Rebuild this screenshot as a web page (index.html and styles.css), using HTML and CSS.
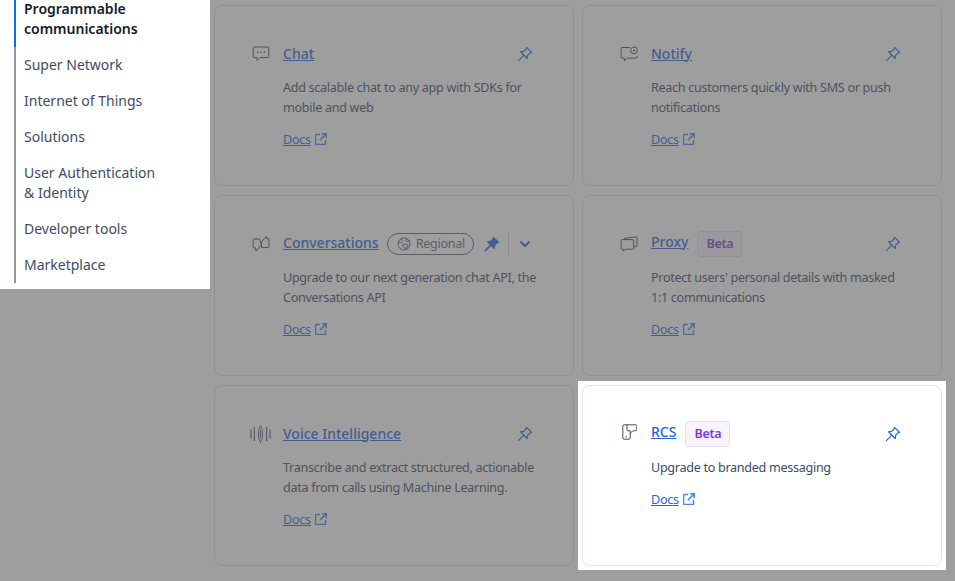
FILE: index.html
```html
<!DOCTYPE html>
<html lang="en">
<head>
  <meta charset="UTF-8" />
  <meta name="viewport" content="width=device-width, initial-scale=1.0" />
  <title>Products</title>
  <link rel="stylesheet" href="styles.css">
</head>
<body>
  <svg class="icon-defs" aria-hidden="true">
    <symbol id="pin" viewBox="0 0 20 20">
      <path d="M11.700 2.600 17.400 8.300 15.600 8.800 12.900 11.600 12.500 15 5 7.500 8.400 7.100 11.200 4.400Z M8.700 11.300 2.600 17.400" fill="none" stroke="currentColor" stroke-width="1.300" stroke-linejoin="round" stroke-linecap="round" />
    </symbol>
    <symbol id="pin-solid" viewBox="0 0 20 20">
      <path d="M11.700 2.600 17.400 8.300 15.600 8.800 12.900 11.600 12.500 15 5 7.500 8.400 7.100 11.200 4.400Z" fill="currentColor" stroke="currentColor" stroke-width="1.300" stroke-linejoin="round" />
      <path d="M8.700 11.300 2.600 17.400" fill="none" stroke="currentColor" stroke-width="1.800" stroke-linecap="round" />
    </symbol>
    <symbol id="external" viewBox="0 0 12 12">
      <path d="M5 1.500H1.200a.6.6 0 0 0-.6.6v8.700c0 .3.3.6.6.6h8.700c.3 0 .6-.3.6-.6V7" fill="none" stroke="currentColor" stroke-width="1.500" />
      <path d="M4.800 7.200 10.600 1.400M6.800 .8h4.400v4.400" fill="none" stroke="currentColor" stroke-width="1.600" />
    </symbol>
  </svg>

  <div class="overlay"></div>

  <div class="page">
    <nav class="sidebar">
      <ul class="nav-list">
        <li class="nav-item active">Programmable communications</li>
        <li class="nav-item">Super Network</li>
        <li class="nav-item">Internet of Things</li>
        <li class="nav-item">Solutions</li>
        <li class="nav-item">User Authentication<br>&amp; Identity</li>
        <li class="nav-item">Developer tools</li>
        <li class="nav-item">Marketplace</li>
      </ul>
    </nav>

    <main class="cards">
      <section class="card">
        <svg class="card-icon" viewBox="0 0 18 16" aria-hidden="true">
          <path d="M2.200 1h13.600c.6 0 1 .4 1 1v8.600c0 .6-.4 1-1 1H8l-3 3v-3H2.200c-.6 0-1-.4-1-1V2c0-.6.4-1 1-1Z" fill="none" stroke="currentColor" />
          <path d="M5 6.300h1.200M8.400 6.300h1.200M11.800 6.300H13" stroke="currentColor" stroke-width="1.400" />
        </svg>
        <div class="card-head">
          <a class="card-title" href="#">Chat</a>
          <svg class="pin"><use href="#pin" /></svg>
        </div>
        <p class="card-text">Add scalable chat to any app with SDKs for mobile and web</p>
        <a class="docs" href="#">Docs</a><svg class="ext"><use href="#external" /></svg>
      </section>

      <section class="card">
        <svg class="card-icon" viewBox="0 0 18 16" aria-hidden="true">
          <path d="M10 1.500H2c-.5 0-.9.4-.9.9v8.800c0 .5.4.9.9.9h2.400v3l3-3h8.600c.5 0 .9-.4.9-.9V9.800" fill="none" stroke="currentColor" />
          <circle cx="14" cy="4.400" r="3.400" fill="none" stroke="currentColor" />
          <circle cx="14" cy="4.400" r="1" fill="currentColor" />
        </svg>
        <div class="card-head">
          <a class="card-title" href="#">Notify</a>
          <svg class="pin"><use href="#pin" /></svg>
        </div>
        <p class="card-text">Reach customers quickly with SMS or push notifications</p>
        <a class="docs" href="#">Docs</a><svg class="ext"><use href="#external" /></svg>
      </section>

      <section class="card">
        <svg class="card-icon" viewBox="0 0 18 16" aria-hidden="true">
          <path d="M7.500 3H2c-.5 0-.9.4-.9.9v7.200c0 .5.4.9.9.9h1.800v3l3-3 2.600-3.500Z" fill="none" stroke="currentColor" />
          <path d="M9.500 11.600h6.600c.5 0 .9-.4.9-.9V3.500c0-.5-.4-.9-.9-.9h-1.600V.6l-2.400 2-2.600 3.600Z" fill="none" stroke="currentColor" />
        </svg>
        <div class="card-head">
          <a class="card-title lift-sm" href="#">Conversations</a>
          <span class="pill">
            <svg class="globe" viewBox="0 0 16 16" aria-hidden="true">
              <circle cx="8" cy="8" r="6.800" fill="none" stroke="currentColor" stroke-width="1.200" />
              <path d="M5 2.200 6.500 4.600 4.600 6.400 1.600 6.600M10 8.200l2.800.8-1.600 3.600-2 1.200-.6-3.200-2.400-.6.8-2.200ZM10.500 1.800 9.600 4l2.600 1.200 2.400-.8" fill="none" stroke="currentColor" stroke-width="1.100" />
            </svg>
            Regional
          </span>
          <svg class="pin pin-filled"><use href="#pin-solid" /></svg>
          <span class="divider"></span>
          <svg class="chevron" viewBox="0 0 12 8" aria-hidden="true">
            <path d="M1.500 1.500 6 6l4.500-4.500" fill="none" stroke="currentColor" stroke-width="2" />
          </svg>
        </div>
        <p class="card-text">Upgrade to our next generation chat API, the Conversations API</p>
        <a class="docs" href="#">Docs</a><svg class="ext"><use href="#external" /></svg>
      </section>

      <section class="card">
        <svg class="card-icon" viewBox="0 0 18 16" aria-hidden="true">
          <path d="M4.500 3.600V2.400L16 .9c.5 0 1 .3 1 .9v8c0 .5-.4.9-.9.9H13.800" fill="none" stroke="currentColor" />
          <path d="M2 3.600h10.800c.5 0 .9.4.9.9v7.800c0 .5-.4.9-.9.9H5.400L3.400 15v-1.800H2c-.5 0-.9-.4-.9-.9V4.500c0-.5.4-.9.9-.9Z" fill="none" stroke="currentColor" />
        </svg>
        <div class="card-head">
          <a class="card-title lift" href="#">Proxy</a>
          <span class="badge">Beta</span>
          <svg class="pin"><use href="#pin" /></svg>
        </div>
        <p class="card-text">Protect users' personal details with masked 1:1 communications</p>
        <a class="docs" href="#">Docs</a><svg class="ext"><use href="#external" /></svg>
      </section>

      <section class="card">
        <svg class="card-icon wide" viewBox="0 0 22 18" aria-hidden="true">
          <path d="M1 4.500v9M4.300 2v14M16.700 2v14M20 4.500v9" fill="none" stroke="currentColor" stroke-width="1" />
          <path d="M10.500 .5C7.800 5 7.800 13 10.500 17.500 13.200 13 13.200 5 10.500 .5ZM10.500 5v8" fill="none" stroke="currentColor" stroke-width=".9" />
        </svg>
        <div class="card-head">
          <a class="card-title" href="#">Voice Intelligence</a>
          <svg class="pin"><use href="#pin" /></svg>
        </div>
        <p class="card-text">Transcribe and extract structured, actionable data from calls using Machine Learning.</p>
        <a class="docs" href="#">Docs</a><svg class="ext"><use href="#external" /></svg>
      </section>

      <div class="spotlight">
        <section class="card">
          <svg class="card-icon narrow" viewBox="0 0 15 16" aria-hidden="true">
            <path d="M5 .8H2C1.200 .8 .8 1.200 .8 2v12c0 .8.4 1.200 1.200 1.200h5c.8 0 1.200-.4 1.200-1.200V9" fill="none" stroke="currentColor" />
            <path d="M5 .8h8.800c.6 0 1 .4 1 1v4c0 .6-.4 1-1 1h-3L8.300 9.300V6.800H6c-.6 0-1-.4-1-1Z" fill="none" stroke="currentColor" />
            <path d="M3.500 12.800H5" stroke="currentColor" />
          </svg>
          <div class="card-head">
            <a class="card-title lift" href="#">RCS</a>
            <span class="badge">Beta</span>
            <svg class="pin"><use href="#pin" /></svg>
          </div>
          <p class="card-text">Upgrade to branded messaging</p>
          <a class="docs" href="#">Docs</a><svg class="ext"><use href="#external" /></svg>
        </section>
      </div>
    </main>
  </div>
</body>
</html>
```

FILE: styles.css
```css
html, body {
  height: 100%;
}

body {
  font-family: 'Noto Sans', 'Open Sans', sans-serif;
  font-size: 14px;
  line-height: 20px;
  background-color: #fff;
  color: #404b63;
  margin: 0;
  overflow: hidden;
}

.icon-defs {
  display: none;
}

.overlay {
  position: fixed;
  inset: 0;
  z-index: 1;
  background-color: rgba(88, 88, 88, 0.58);
}

.page {
  display: flex;
  align-items: flex-start;
}

/* sidebar, scrolled a little past its top */
.sidebar {
  position: relative;
  z-index: 2;
  width: 196px;
  margin-top: -9px;
  padding: 0 0 6px 14px;
  background-color: #fff;
}

.nav-list {
  list-style: none;
  margin: 0;
  padding: 0;
  border-left: 2px solid #8f95ad;
}

.nav-item {
  padding: 8px 30px 8px 8px;
}

.nav-item.active {
  margin-left: -2px;
  border-left: 2px solid #0a6cf0;
  color: #121c2d;
  font-weight: 600;
}

/* cards */
.cards {
  display: grid;
  grid-template-columns: 360px 360px;
  grid-auto-rows: 181px;
  gap: 9px 8px;
  margin: 5px 0 0 4px;
}

.card {
  box-sizing: border-box;
  height: 181px;
  padding: 35px 40px 0 68px;
  position: relative;
  background-color: #fff;
  border: 1px solid #e1e3ea;
  border-radius: 8px;
}

.spotlight {
  position: relative;
  z-index: 2;
  margin: -4px;
  padding: 4px;
  background-color: #fff;
  height: 181px;
}

.card-icon {
  position: absolute;
  left: 37px;
  top: 40px;
  width: 18px;
  height: 16px;
  color: #404b63;
}

.card-icon.wide {
  left: 35px;
  top: 39px;
  width: 22px;
  height: 18px;
}

.card-icon.narrow {
  left: 39px;
  top: 38px;
  width: 15px;
  height: 16px;
}

.card-head {
  display: flex;
  align-items: center;
  gap: 8px;
  height: 26px;
  margin-bottom: 11px;
}

.card-title {
  color: #1f66dc;
  font-size: 14px;
  font-weight: 500;
  margin-bottom: 1px;
}

.card-title.lift {
  margin-bottom: 5px;
}

.card-title.lift-sm {
  margin-bottom: 3px;
}

.pin {
  flex-shrink: 0;
  width: 18px;
  height: 18px;
  margin: 0 -1px 0 auto;
  color: #1f66dc;
}

.pill {
  display: inline-flex;
  align-items: center;
  gap: 5px;
  box-sizing: border-box;
  height: 22px;
  padding: 0 8px 0 9px;
  border: 1px solid #606b85;
  border-radius: 11px;
  color: #606b85;
  font-size: 12.6px;
  letter-spacing: -0.3px;
}

.globe {
  width: 14px;
  height: 14px;
}

.pin-filled {
  margin: 0 -1px 0 1px;
}

.divider {
  flex-shrink: 0;
  width: 1px;
  height: 24px;
  background-color: #cacdd8;
}

.chevron {
  flex-shrink: 0;
  width: 12px;
  height: 8px;
  margin: 0 0 0 2px;
  color: #1f66dc;
}

.badge {
  box-sizing: border-box;
  height: 26px;
  margin-left: 1px;
  padding: 2px 8px;
  background-color: #f8f4ff;
  border: 1px solid #e7dcfa;
  border-radius: 4px;
  color: #7d3ccf;
  font-size: 12.6px;
  font-weight: 600;
  letter-spacing: -0.3px;
}

.card-text {
  margin: 0 -8px 11px 0;
  font-size: 12.6px;
  letter-spacing: -0.3px;
}

.docs {
  color: #1f66dc;
  font-size: 12.6px;
  letter-spacing: -0.3px;
}

.ext {
  width: 12px;
  height: 12px;
  margin-left: 4px;
  vertical-align: -1px;
  color: #4d88e8;
}
```
